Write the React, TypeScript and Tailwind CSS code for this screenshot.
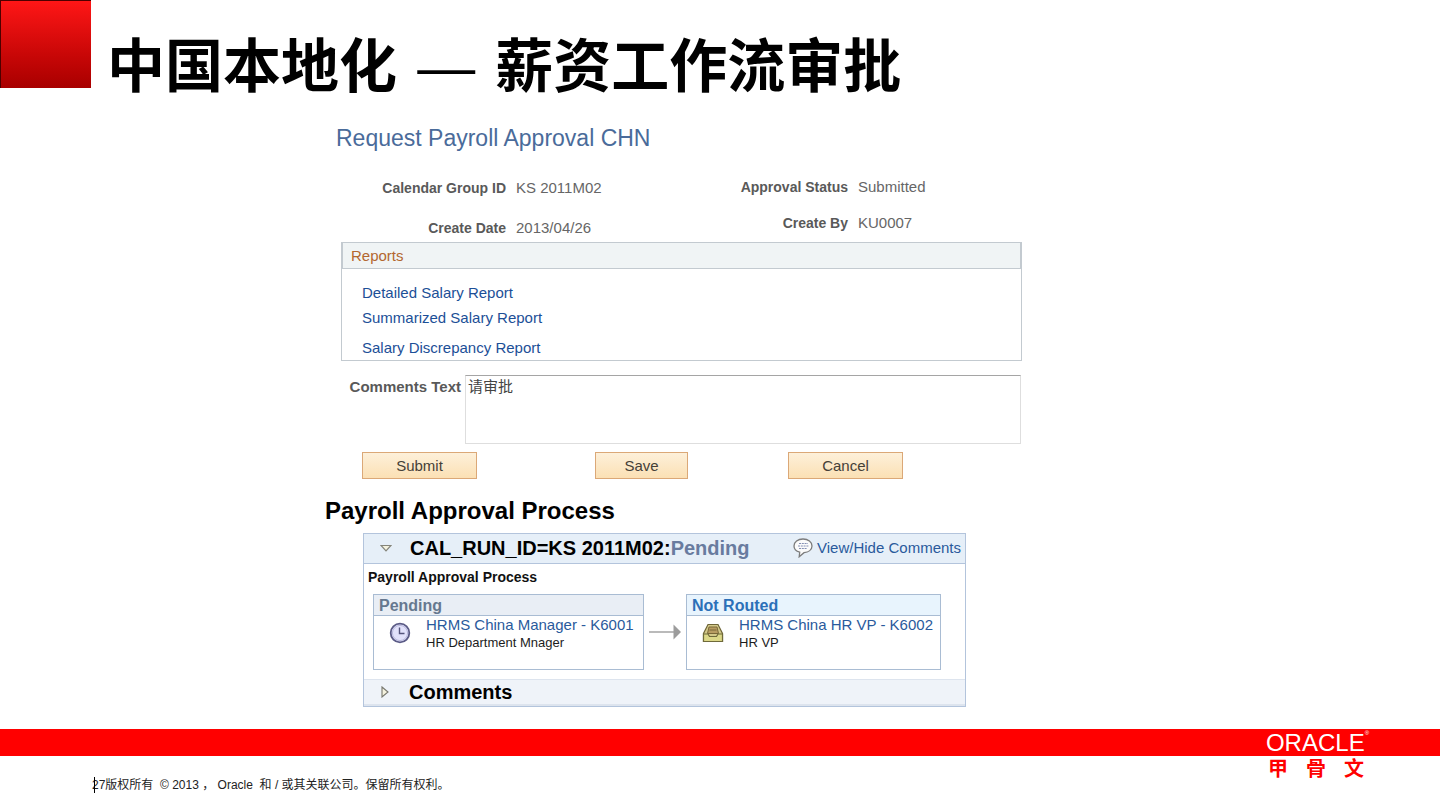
import React, { useState } from "react";

const REPORTS = [
  { name: "Detailed Salary Report", row: "h-[26px]" },
  { name: "Summarized Salary Report", row: "h-6" },
  { name: "Salary Discrepancy Report", row: "h-9" },
];

const BUTTON =
  "h-[27px] border border-[#dba877] bg-linear-to-b from-[#fdf0da] to-[#fbe0b4] text-[15px] leading-5 text-[#454038]";

function Field({ label, value, width }: { label: string; value: string; width: string }) {
  return (
    <div className="flex h-5 items-center gap-[10px]">
      <dt className={`${width} text-right text-[14px] leading-5 font-bold text-[#595959]`}>{label}</dt>
      <dd className="text-[15px] leading-5 text-[#666666]">{value}</dd>
    </div>
  );
}

function ClockIcon() {
  return (
    <svg width="22" height="22" viewBox="0 0 22 22" aria-hidden="true">
      <circle cx="11" cy="11" r="9.3" fill="#e2e2fb" stroke="#5b5b86" strokeWidth="1.8" />
      <circle cx="11" cy="11" r="7.6" fill="none" stroke="#b9b9dc" strokeWidth="1" />
      <path d="M10.5 5.5V11.5H15.5" fill="none" stroke="#55557c" strokeWidth="1.4" />
    </svg>
  );
}

function TrayIcon() {
  return (
    <svg width="22" height="22" viewBox="0 0 22 22" aria-hidden="true">
      <path d="M6 2.500H16L20.500 11.500V19.500H1.500V11.500Z" fill="#d3c98a" stroke="#6f6638" strokeWidth="1.2" />
      <path d="M7 5H15L16.500 11.500H5.500Z" fill="#b79c62" stroke="#7a6838" />
      <path d="M7.500 8H14.500" stroke="#7a6838" />
      <path d="M1.500 12H6L7.500 14.500H14.500L16 12H20.500V19.500H1.500Z" fill="#dcd888" stroke="#6f6a3a" strokeWidth="1.2" />
    </svg>
  );
}

function SpeechIcon() {
  return (
    <svg width="20" height="20" viewBox="0 0 20 20" aria-hidden="true">
      <path
        d="M10 1C15.2 1 19 3.9 19 7.9C19 11.8 15.4 14.3 11 14.7L6.2 18.8L6.7 14.2C3.2 13.2 1 10.9 1 7.9C1 3.9 4.8 1 10 1Z"
        fill="#fbfbfb"
        stroke="#7c7c7c"
        strokeWidth="1.3"
      />
      <path d="M6 5.5H15M5 8H15.5M6 10.5H14" stroke="#8590b5" strokeDasharray="2 0.8" />
    </svg>
  );
}

function Step(props: {
  status: string;
  header: string;
  width: string;
  icon: React.ReactNode;
  person: string;
  role: string;
}) {
  return (
    <article className={`${props.width} h-[76px] border border-[#a9bcd3] bg-white`}>
      <h4 className={`${props.header} h-[21px] border-b border-[#a9bcd3] px-[5px] text-[16px] leading-[21px] font-bold`}>
        {props.status}
      </h4>
      <div className="flex pl-[15px]">
        <span className="w-[37px] shrink-0 pt-[6px]">{props.icon}</span>
        <div className="whitespace-nowrap">
          <a href="#person" className="block text-[15px] leading-[18px] text-[#2a5a9c]">{props.person}</a>
          <p className="text-[13px] leading-[18px] text-[#1c1c1c]">{props.role}</p>
        </div>
      </div>
    </article>
  );
}

export default function App() {
  const [comment, setComment] = useState("请审批");
  return (
    <div className="bg-white font-['Liberation_Sans','Noto_Sans_CJK_SC',sans-serif]">
      <header className="flex h-[88px] gap-4">
        <div className="w-[91px] shrink-0 border-t border-l border-[#4d0000] bg-linear-to-b from-[#ff1616] to-[#a80000]" />
        <h1 className="pt-[27px] text-[58px] leading-[80px] font-bold whitespace-nowrap text-black">
          中国本地化 <span className="mx-1 font-normal">—</span> 薪资工作流审批
        </h1>
      </header>

      <main className="ml-[325px] max-w-[697px]">
        <form onSubmit={(e) => e.preventDefault()}>
          <h2 className="pt-9 pl-[11px] text-[23px] leading-7 text-[#4a6b9a]">Request Payroll Approval CHN</h2>

          <div className="flex h-[90px] pt-[25px]">
            <dl className="flex w-[342px] flex-col gap-5 pt-px">
              <Field label="Calendar Group ID" value="KS 2011M02" width="w-[181px]" />
              <Field label="Create Date" value="2013/04/26" width="w-[181px]" />
            </dl>
            <dl className="flex flex-col gap-4">
              <Field label="Approval Status" value="Submitted" width="w-[181px]" />
              <Field label="Create By" value="KU0007" width="w-[181px]" />
            </dl>
          </div>

          <section className="ml-4 border border-[#c3cad0]">
            <h3 className="h-[26px] border-x border-b border-[#c3cad0] bg-[#f0f4f5] px-2 text-[15px] leading-[25px] text-[#b3672f]">
              Reports
            </h3>
            <ul className="h-[91px] pt-[11px] pl-5">
              {REPORTS.map((r) => (
                <li key={r.name} className={`${r.row} flex items-center`}>
                  <a href="#report" className="text-[15px] leading-5 text-[#1c4f97]">{r.name}</a>
                </li>
              ))}
            </ul>
          </section>

          <div className="mt-[14px] flex">
            <label htmlFor="comments" className="w-[140px] shrink-0 pt-[2px] pr-1 text-right text-[15px] leading-5 font-bold text-[#595959]">
              Comments Text
            </label>
            <textarea
              id="comments"
              value={comment}
              onChange={(e) => setComment(e.target.value)}
              className="mr-px h-[69px] grow resize-none border border-[#dedede] border-t-[#a5a5a5] bg-white px-[2px] text-[15px] leading-[21px] text-[#444444] outline-none"
            />
          </div>

          <div className="mt-2 flex pl-[37px]">
            <button type="submit" className={`${BUTTON} w-[115px]`}>Submit</button>
            <button type="button" className={`${BUTTON} ml-[118px] w-[93px]`}>Save</button>
            <button type="button" className={`${BUTTON} ml-[100px] w-[115px]`}>Cancel</button>
          </div>
        </form>

        <h2 className="mt-[18px] text-[24px] leading-7 font-bold text-black">Payroll Approval Process</h2>

        <section className="mt-2 mr-14 ml-[38px] border border-[#b3c4dc]">
          <div className="flex h-[30px] items-center border-b border-[#b3c4dc] bg-[#e6eff8] pr-1 pb-px pl-4">
            <button type="button" aria-label="Collapse" className="mr-[18px]">
              <svg width="12" height="8" viewBox="0 0 12 8" className="block">
                <path d="M1 1.5H11L6 6.8Z" fill="#f4f2df" stroke="#85857b" strokeWidth="1.2" />
              </svg>
            </button>
            <h3 className="grow text-[20px] leading-7 font-bold whitespace-nowrap text-black">
              CAL_RUN_ID=KS 2011M02:<span className="text-[#687b9f]">Pending</span>
            </h3>
            <a href="#comments" className="flex items-center gap-1 text-[15px] leading-5 whitespace-nowrap text-[#2a5a9c]">
              <SpeechIcon />
              View/Hide Comments
            </a>
          </div>
          <div className="h-[115px] pt-1 pl-1">
            <p className="text-[14px] leading-[18px] font-bold text-[#111111]">Payroll Approval Process</p>
            <div className="flex pt-2 pl-[5px]">
              <Step
                status="Pending"
                header="bg-[#e9eef5] text-[#66788f]"
                width="w-[271px]"
                icon={<ClockIcon />}
                person="HRMS China Manager - K6001"
                role="HR Department Mnager"
              />
              <div className="flex w-[42px] shrink-0 items-center justify-center">
                <svg width="34" height="16" viewBox="0 0 34 16" aria-hidden="true">
                  <path d="M1 8H26" stroke="#9c9c9c" strokeWidth="1.4" />
                  <path d="M25.5 0.5L33 8L25.5 15.5Z" fill="#9c9c9c" />
                </svg>
              </div>
              <Step
                status="Not Routed"
                header="bg-[#e8f4fd] text-[#2c70b8]"
                width="w-[255px]"
                icon={<TrayIcon />}
                person="HRMS China HR VP - K6002"
                role="HR VP"
              />
            </div>
          </div>
          <div className="flex h-[27px] items-center border-t border-b-2 border-[#dde4ee] bg-[#eff3f9] pl-[17px]">
            <button type="button" aria-label="Expand" className="mr-5">
              <svg width="8" height="12" viewBox="0 0 8 12" className="block">
                <path d="M1 1L7 6L1 11Z" fill="#f4f2df" stroke="#77776e" strokeWidth="1.1" />
              </svg>
            </button>
            <h3 className="text-[20px] leading-6 font-bold text-black">Comments</h3>
          </div>
        </section>
      </main>

      <footer className="mt-[22px]">
        <div className="flex h-[27px] items-center justify-end bg-[#ff0000] pr-[67px]">
          <span className="flex w-[111px] items-start justify-center text-[24px] leading-[27px] text-white">
            ORACLE<sup className="pt-1 text-[6px] leading-[6px]">®</sup>
          </span>
        </div>
        <div className="flex items-start justify-between pr-[67px] pl-[92px]">
          <p className="relative mt-[21px] text-[12px] leading-4 whitespace-pre text-[#222222]">
            <span className="absolute top-0 left-[2px] h-4 w-px bg-black" />
            {"27版权所有  © 2013 ， Oracle  和 / 或其关联公司。保留所有权利。"}
          </p>
          <p className="grid w-[114px] grid-cols-3 text-center text-[20px] leading-[26px] font-bold text-[#ff0000]">
            <span>甲</span>
            <span>骨</span>
            <span>文</span>
          </p>
        </div>
      </footer>
    </div>
  );
}
